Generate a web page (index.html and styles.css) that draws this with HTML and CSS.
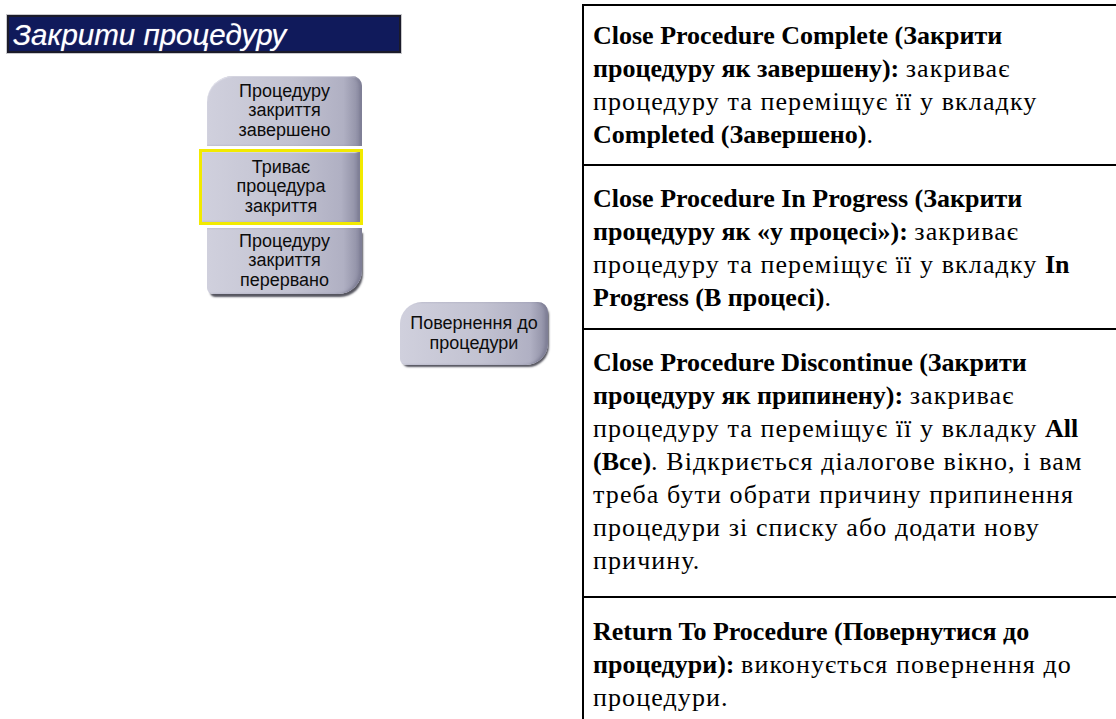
FILE: index.html
```html
<!DOCTYPE html>
<html>

<head>
  <title>Закрити процедуру</title>
  <link rel="stylesheet" href="styles.css">
</head>

<body>
  <div class="page">
    <div class="screen">
      <div class="title-bar">Закрити процедуру</div>

      <div class="choice-stack">
        <div class="proc-btn top">Процедуру<br>закриття<br>завершено</div>
        <div class="proc-btn selected">Триває<br>процедура<br>закриття</div>
        <div class="proc-btn bottom">Процедуру<br>закриття<br>перервано</div>
      </div>

      <div class="proc-btn return">Повернення до<br>процедури</div>
    </div>

    <div class="legend">
      <div class="legend-row first">
        <b>Close Procedure Complete (Закрити<br>процедуру як завершену):</b> <span class="txt">закриває<br>процедуру та переміщує її у вкладку<br></span><b>Completed (Завершено)</b><span class="txt">.</span>
      </div>
      <div class="legend-row">
        <b>Close Procedure In Progress (Закрити<br>процедуру як «у процесі»):</b> <span class="txt">закриває<br>процедуру та переміщує її у вкладку </span><b>In<br>Progress (В процесі)</b><span class="txt">.</span>
      </div>
      <div class="legend-row tall">
        <b>Close Procedure Discontinue (Закрити<br>процедуру як припинену):</b> <span class="txt">закриває<br>процедуру та переміщує її у вкладку </span><b>All<br>(Все)</b><span class="txt">. Відкриється діалогове вікно, і вам<br>треба бути обрати причину припинення<br>процедури зі списку або додати нову<br>причину.</span>
      </div>
      <div class="legend-row last">
        <b>Return To Procedure (Повернутися до<br>процедури):</b> <span class="txt">виконується повернення до<br>процедури.</span>
      </div>
    </div>
  </div>
</body>

</html>
```

FILE: styles.css
```css
body {
  margin: 0;
  padding: 0;
  background-color: #fff;
  font-family: "Liberation Sans", Arial, sans-serif;
  color: #111;
}

.page {
  display: flex;
  height: 719px;
  overflow: hidden;
}

/* left side: the screen capture */
.screen {
  width: 582px;
  flex-shrink: 0;
  padding-top: 15px;
  box-sizing: border-box;
}

.title-bar {
  margin-left: 7px;
  width: 386px;
  height: 34px;
  background-color: #101a5b;
  border: 2px solid #1b1b2a;
  outline: 1px solid #c9c9cc;
  color: #fff;
  font-style: italic;
  font-size: 29.5px;
  line-height: 35px;
  padding-left: 4px;
  text-shadow: 0 0 1px #8d93b8;
}

.choice-stack {
  margin-top: 23px;
  margin-left: 199px;
  width: 164px;
  display: flex;
  flex-direction: column;
  gap: 3px;
}

.proc-btn {
  box-sizing: border-box;
  width: 155px;
  margin-left: 8px;
  height: 70px;
  display: flex;
  align-items: center;
  justify-content: center;
  text-align: center;
  font-size: 18px;
  line-height: 19.5px;
  color: #0c0c0c;
  background: linear-gradient(to right, #d0d0dd 0%, #c2c2d1 55%, #b0b0c3 88%, #8a8aa0 100%);
  box-shadow: inset -4px 0 3px -1px #7f7f96, inset 0 1px 1px #e6e6ee;
}

.proc-btn.top {
  border-radius: 26px 10px 0 0;
}

.proc-btn.selected {
  width: 164px;
  height: 76px;
  margin-left: 0;
  border: 3px solid #f2ea00;
}

.proc-btn.bottom {
  height: 66px;
  border-radius: 0 0 24px 6px;
  box-shadow: inset -4px 0 3px -1px #7f7f96, 2px 4px 2px -1px #55555f;
}

.proc-btn.return {
  margin-top: 8px;
  margin-left: 400px;
  width: 148px;
  height: 63px;
  border-radius: 22px 10px 22px 6px;
  box-shadow: inset -4px 0 3px -1px #7f7f96, 2px 3px 2px -1px #55555f;
}

/* right side: the description table */
.legend {
  flex: 1;
  margin-top: 4px;
  border-left: 2px solid #000;
  border-top: 2px solid #000;
  font-family: "Liberation Serif", "Times New Roman", serif;
  font-size: 26px;
  line-height: 33px;
  color: #000;
}

.legend-row {
  padding: 16px 0 14px 9px;
  border-bottom: 2px solid #000;
  white-space: nowrap;
}

.legend-row.first {
  padding-top: 13px;
  padding-bottom: 13px;
}

.legend-row.tall {
  padding-bottom: 19px;
}

.legend-row.last {
  padding-top: 17px;
  border-bottom: none;
}

.txt {
  letter-spacing: 1.1px;
}
```
